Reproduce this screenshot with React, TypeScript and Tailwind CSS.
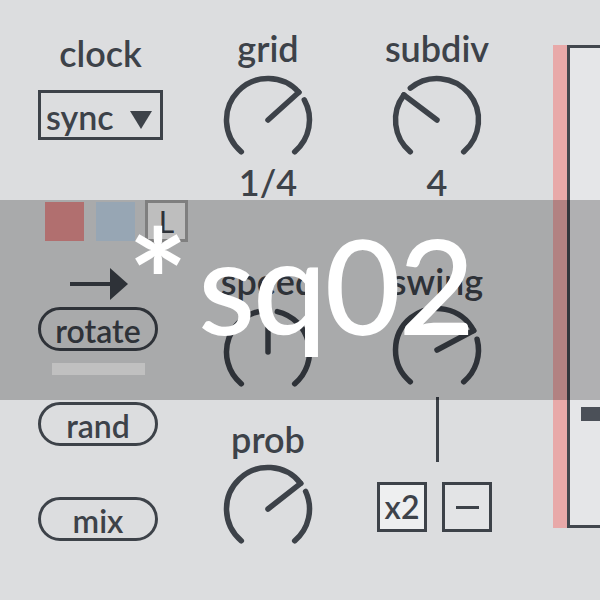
const ink = '#3d4249';

const polar = ( r: number, deg: number ) => {
    const a = ( deg * Math.PI ) / 180;
    return [48 + r * Math.sin( a ), 48 - r * Math.cos( a )];
};

const arc = ( r: number, a0: number, a1: number ) => {
    const [x0, y0] = polar( r, a0 );
    const [x1, y1] = polar( r, a1 );
    const large = a1 - a0 > 180 ? 1 : 0;
    return `M${x0} ${y0} A${r} ${r} 0 ${large} 1 ${x1} ${y1}`;
};

// live.dial style knob: value arc, small gap, rest of the arc, needle
const Knob = ( { angle }: { angle: number } ) => {
    const r = 41.5;
    const [nx, ny] = polar( r, angle );
    return (
        <svg width="96" height="96" viewBox="0 0 96 96" className="block">
            <g fill="none" stroke={ink} strokeWidth="5.5" strokeLinecap="round">
                <path d={arc( r, -140, angle )} />
                <path d={arc( r, angle + 13, 140 )} />
                <line x1="48" y1="48" x2={nx} y2={ny} />
            </g>
        </svg>
    );
};

const Label = ( { children }: { children: React.ReactNode } ) => (
    <div className="h-[36px] text-[36px] leading-none whitespace-nowrap">{children}</div>
);

const Pill = ( { children }: { children: React.ReactNode } ) => (
    <div className="w-[120px] h-[44px] rounded-full border-[3px] border-[#3d4249] flex justify-center items-start pt-[5px] text-[32px] leading-none">
        {children}
    </div>
);

export default function App() {
    return (
        <div className="relative w-[600px] h-[600px] overflow-hidden bg-[#dcdddf] text-[#3d4249] font-['Lato',sans-serif] font-semibold">
            <div className="flex pl-[38px]">
                {/* left column */}
                <div className="shrink-0 w-[150px] flex flex-col pt-[35px]">
                    <div className="w-[125px] text-center">
                        <Label>clock</Label>
                    </div>
                    <div className="mt-[19px] w-[125px] h-[50px] border-[3px] border-[#3d4249] flex items-start justify-between pl-[5px] pr-[8px] pt-[7px]">
                        <span className="text-[34px] leading-none">sync</span>
                        <svg width="22" height="18" viewBox="0 0 22 18" className="mt-[11px]">
                            <polygon points="0,0 22,0 11,18" fill={ink} />
                        </svg>
                    </div>
                    <div className="mt-[60px] h-[42px] flex items-center">
                        <div className="ml-[7px] w-[39px] h-[39px] bg-[#e79191]" />
                        <div className="ml-[12px] w-[39px] h-[39px] bg-[#c5d9ea]" />
                        <div className="ml-[10px] w-[43px] h-[42px] border-[3px] border-[#a6a6a6] bg-[#f7f7f7] flex justify-center items-start pt-[3px] text-[30px] font-normal leading-none">
                            L
                        </div>
                    </div>
                    <svg width="58" height="32" viewBox="0 0 58 32" className="mt-[26px] ml-[32px] block">
                        <rect x="0" y="14" width="46" height="4" fill={ink} />
                        <polygon points="40,0 58,16 40,32" fill={ink} />
                    </svg>
                    <div className="mt-[7px]">
                        <Pill>rotate</Pill>
                    </div>
                    <div className="mt-[12px] ml-[14px] w-[93px] h-[12px] bg-[#fafafa]" />
                    <div className="mt-[27px]">
                        <Pill>rand</Pill>
                    </div>
                    <div className="mt-[51px]">
                        <Pill>mix</Pill>
                    </div>
                </div>

                {/* knob column 1 */}
                <div className="shrink-0 ml-[25px] w-[110px] flex flex-col items-center pt-[30px]">
                    <Label>grid</Label>
                    <div className="mt-[6px]"><Knob angle={48} /></div>
                    <div className="-mt-[4px]"><Label>1/4</Label></div>
                    <div className="mt-[63px]"><Label>speed</Label></div>
                    <div className="mt-[5px]"><Knob angle={0} /></div>
                    <div className="mt-[21px]"><Label>prob</Label></div>
                    <div className="mt-[4px]"><Knob angle={52} /></div>
                </div>

                {/* knob column 2 */}
                <div className="shrink-0 ml-[54px] w-[120px] flex flex-col items-center pt-[30px]">
                    <Label>subdiv</Label>
                    <div className="mt-[6px]"><Knob angle={-53} /></div>
                    <div className="-mt-[4px]"><Label>4</Label></div>
                    <div className="mt-[63px]"><Label>swing</Label></div>
                    <div className="mt-[3px]"><Knob angle={62} /></div>
                    <div className="-mt-[1px] w-[3px] h-[65px] bg-[#3d4249]" />
                    <div className="mt-[20px] self-start flex gap-[15px]">
                        <div className="w-[50px] h-[50px] border-[3px] border-[#3d4249] bg-[#eeeff0] flex items-center justify-center text-[32px] leading-none">
                            x2
                        </div>
                        <div className="w-[50px] h-[50px] border-[3px] border-[#3d4249] bg-[#e3e4e6] flex items-center justify-center">
                            <div className="w-[23px] h-[3px] bg-[#3d4249]" />
                        </div>
                    </div>
                </div>

                {/* right meter */}
                <div className="shrink-0 ml-[56px] mt-[45px] flex h-[483px]">
                    <div className="w-[14px] h-full bg-[#e8a9a9]" />
                    <div className="w-[60px] h-full border-[3px] border-[#42474e] bg-[#e5e6e8] pt-[359px] pl-[11px]">
                        <div className="w-[40px] h-[14px] bg-[#4b5058]" />
                    </div>
                </div>
            </div>

            {/* title overlay */}
            <div className="absolute left-0 top-[200px] w-[600px] h-[200px] bg-black/[0.23] flex items-start pl-[128px] text-white">
                <span className="mt-[8px] text-[141px] leading-none font-bold">*</span>
                <span className="ml-[10px] mt-[18px] text-[132px] leading-none font-medium tracking-[-2.5px]">sq02</span>
            </div>
        </div>
    );
}
